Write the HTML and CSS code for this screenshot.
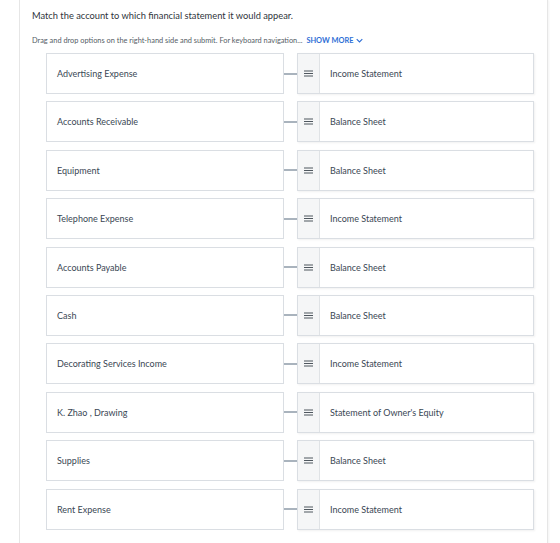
FILE: index.html
```html
<!DOCTYPE html>
<html lang="en">
<head>
    <meta charset="UTF-8">
    <title>Matching</title>
    <link rel="stylesheet" href="styles.css">
</head>
<body>
    <div class="panel">
        <p class="prompt">Match the account to which financial statement it would appear.</p>
        <p class="hint">Drag and drop options on the right-hand side and submit. For keyboard navigation...
            <span class="more">SHOW MORE
                <svg class="chev" viewBox="0 0 10 6" width="7" height="5"><path d="M1 1l4 4 4-4" fill="none" stroke="#2f6fd6" stroke-width="1.6"/></svg>
            </span>
        </p>

        <div class="rows">
            <div class="row">
                <div class="account">Advertising Expense</div>
                <div class="link"></div>
                <div class="answer"><span class="handle"><svg class="grip" viewBox="0 0 9 7"><path d="M0 1h9M0 3.5h9M0 6h9"/></svg></span><span class="label">Income Statement</span></div>
            </div>
            <div class="row">
                <div class="account">Accounts Receivable</div>
                <div class="link"></div>
                <div class="answer"><span class="handle"><svg class="grip" viewBox="0 0 9 7"><path d="M0 1h9M0 3.5h9M0 6h9"/></svg></span><span class="label">Balance Sheet</span></div>
            </div>
            <div class="row">
                <div class="account">Equipment</div>
                <div class="link"></div>
                <div class="answer"><span class="handle"><svg class="grip" viewBox="0 0 9 7"><path d="M0 1h9M0 3.5h9M0 6h9"/></svg></span><span class="label">Balance Sheet</span></div>
            </div>
            <div class="row">
                <div class="account">Telephone Expense</div>
                <div class="link"></div>
                <div class="answer"><span class="handle"><svg class="grip" viewBox="0 0 9 7"><path d="M0 1h9M0 3.5h9M0 6h9"/></svg></span><span class="label">Income Statement</span></div>
            </div>
            <div class="row">
                <div class="account">Accounts Payable</div>
                <div class="link"></div>
                <div class="answer"><span class="handle"><svg class="grip" viewBox="0 0 9 7"><path d="M0 1h9M0 3.5h9M0 6h9"/></svg></span><span class="label">Balance Sheet</span></div>
            </div>
            <div class="row">
                <div class="account">Cash</div>
                <div class="link"></div>
                <div class="answer"><span class="handle"><svg class="grip" viewBox="0 0 9 7"><path d="M0 1h9M0 3.5h9M0 6h9"/></svg></span><span class="label">Balance Sheet</span></div>
            </div>
            <div class="row">
                <div class="account">Decorating Services Income</div>
                <div class="link"></div>
                <div class="answer"><span class="handle"><svg class="grip" viewBox="0 0 9 7"><path d="M0 1h9M0 3.5h9M0 6h9"/></svg></span><span class="label">Income Statement</span></div>
            </div>
            <div class="row">
                <div class="account">K. Zhao , Drawing</div>
                <div class="link"></div>
                <div class="answer"><span class="handle"><svg class="grip" viewBox="0 0 9 7"><path d="M0 1h9M0 3.5h9M0 6h9"/></svg></span><span class="label">Statement of Owner's Equity</span></div>
            </div>
            <div class="row">
                <div class="account">Supplies</div>
                <div class="link"></div>
                <div class="answer"><span class="handle"><svg class="grip" viewBox="0 0 9 7"><path d="M0 1h9M0 3.5h9M0 6h9"/></svg></span><span class="label">Balance Sheet</span></div>
            </div>
            <div class="row">
                <div class="account">Rent Expense</div>
                <div class="link"></div>
                <div class="answer"><span class="handle"><svg class="grip" viewBox="0 0 9 7"><path d="M0 1h9M0 3.5h9M0 6h9"/></svg></span><span class="label">Income Statement</span></div>
            </div>
        </div>
    </div>
</body>
</html>
```

FILE: styles.css
```css
body {
    margin: 0;
    background-color: #ffffff;
    font-family: Lato, "Open Sans", sans-serif;
    color: #333a42;
}

.panel {
    margin-left: 19px;
    width: 529px;
    height: 560px;
    border: 1px solid #e6e6e6;
    border-top: 0;
    box-shadow: 1px 0 2px rgba(0, 0, 0, 0.05);
    padding: 9px 0 0 12px;
    box-sizing: border-box;
}

.prompt {
    margin: 0;
    font-size: 9.3px;
    line-height: 13px;
    color: #2f353b;
}

.hint {
    margin: 14px 0 0 0;
    font-size: 7.4px;
    line-height: 10px;
    color: #555d66;
}

.more {
    color: #2f6fd6;
    font-weight: bold;
    margin-left: 2px;
}

.chev {
    margin-left: 1px;
}

.rows {
    margin: 7px 0 0 14px;
    display: flex;
    flex-direction: column;
    gap: 7.4px;
}

.row {
    display: flex;
    align-items: center;
    height: 41px;
}

.account {
    width: 238px;
    height: 41px;
    box-sizing: border-box;
    border: 1px solid #dadee3;
    padding-left: 10px;
    display: flex;
    align-items: center;
    font-size: 9px;
    color: #3a4754;
}

.link {
    width: 13px;
    height: 2px;
    background-color: #a9b3bd;
}

.answer {
    width: 237px;
    height: 41px;
    box-sizing: border-box;
    border: 1px solid #dadee3;
    box-shadow: 1px 1px 2px rgba(0, 0, 0, 0.06);
    display: flex;
}

.handle {
    width: 21px;
    background-color: #f5f6f7;
    border-right: 1px solid #e0e3e6;
    display: flex;
    align-items: center;
    justify-content: center;
}

.grip {
    width: 9px;
    height: 7px;
    stroke: #4f575f;
    stroke-width: 1.1;
    fill: none;
}

.label {
    display: flex;
    align-items: center;
    padding-left: 10px;
    font-size: 9px;
    color: #3a4754;
}
```
